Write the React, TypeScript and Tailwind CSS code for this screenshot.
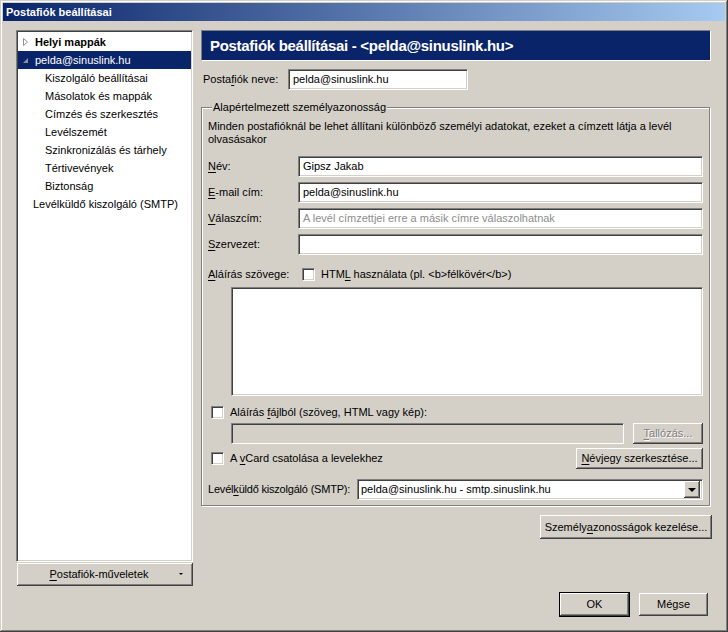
import { ReactNode } from 'react';

const sunken =
  'border border-t-[#808080] border-l-[#808080] border-b-white border-r-white shadow-[inset_1px_1px_0_#404040,inset_-1px_-1px_0_#d4d0c8]';
const raised =
  'bg-[#d4d0c8] shadow-[inset_-1px_-1px_0_#404040,inset_1px_1px_0_#ffffff,inset_-2px_-2px_0_#808080,inset_2px_2px_0_#d4d0c8]';

const treeItems = [
  'Kiszolgáló beállításai',
  'Másolatok és mappák',
  'Címzés és szerkesztés',
  'Levélszemét',
  'Szinkronizálás és tárhely',
  'Tértivevények',
  'Biztonság',
];

function Button({
  children,
  className = '',
  disabled = false,
  isDefault = false,
}: {
  children: ReactNode;
  className?: string;
  disabled?: boolean;
  isDefault?: boolean;
}) {
  return (
    <div
      className={`flex items-center justify-center ${raised} ${isDefault ? 'outline outline-1 outline-black' : ''} ${
        disabled ? 'text-[#808080] [text-shadow:1px_1px_0_#fff]' : 'text-black'
      } ${className}`}
    >
      {children}
    </div>
  );
}

function Checkbox() {
  return <span className={`block w-[13px] h-[13px] bg-white shrink-0 ${sunken}`} />;
}

function TextField({ value, placeholder, className = '' }: { value?: string; placeholder?: string; className?: string }) {
  return (
    <div className={`h-[21px] bg-white flex items-center px-[4px] ${sunken} ${className}`}>
      {value ? <span>{value}</span> : <span className="text-[#8d8d8d]">{placeholder}</span>}
    </div>
  );
}

function U({ children }: { children: ReactNode }) {
  return <span className="underline underline-offset-2">{children}</span>;
}

function FieldRow({ label, children }: { label: ReactNode; children: ReactNode }) {
  return (
    <div className="flex items-center h-[21px]">
      <div className="w-[90px] shrink-0">{label}</div>
      <div className="flex-1">{children}</div>
    </div>
  );
}

export default function App() {
  return (
    <div className="w-[728px] h-[632px] bg-[#d4d0c8] text-[11px] leading-[13px] text-black font-['Liberation_Sans',Arial,sans-serif] shadow-[inset_-1px_-1px_0_#404040,inset_1px_1px_0_#d4d0c8,inset_-2px_-2px_0_#808080,inset_2px_2px_0_#ffffff] p-[3px] flex flex-col overflow-hidden">
      {/* title bar */}
      <div className="h-[18px] shrink-0 bg-[linear-gradient(to_right,#0a246a,#a6caf0)] flex items-center pl-[3px]">
        <span className="text-white font-bold">Postafiók beállításai</span>
      </div>

      <div className="flex flex-1 px-[13px] pt-[9px]">
        {/* left column */}
        <div className="w-[177px] flex flex-col shrink-0">
          <div className={`h-[532px] bg-white ${sunken} px-[1px] pt-[2px]`}>
            <div className="h-[18px] flex items-center">
              <svg width="14" height="18" className="ml-[2px] shrink-0" viewBox="0 0 14 18">
                <path d="M3.5 5.5 L7.5 9 L3.5 12.5 Z" fill="none" stroke="#909090" />
              </svg>
              <span className="font-bold ml-[1px]">Helyi mappák</span>
            </div>
            <div className="h-[18px] flex items-center bg-[#0a246a] text-white">
              <svg width="14" height="18" className="ml-[2px] shrink-0" viewBox="0 0 14 18">
                <path d="M8 7 L8 12 L3 12 Z" fill="#8a8fa8" />
              </svg>
              <span className="ml-[1px]">pelda@sinuslink.hu</span>
            </div>
            {treeItems.map((t) => (
              <div key={t} className="h-[18px] flex items-center pl-[27px]">
                {t}
              </div>
            ))}
            <div className="h-[18px] flex items-center pl-[15px]">Levélküldő kiszolgáló (SMTP)</div>
          </div>
          <Button className="h-[23px] mt-[1px] ml-[1px] w-[176px] pr-[12px] relative">
            <span>
              <U>P</U>ostafiók-műveletek
            </span>
            <span className="absolute right-[10px] top-[10px] w-0 h-0 border-l-[2px] border-r-[2px] border-t-[2px] border-l-transparent border-r-transparent border-t-black" />
          </Button>
        </div>

        {/* right column */}
        <div className="flex-1 ml-[8px] flex flex-col">
          <div className="h-[31px] w-[510px] bg-[#0a246a] border border-t-[#808080] border-l-[#808080] border-b-white border-r-white flex items-center pl-[8px]">
            <span className="text-white font-bold text-[15px] tracking-[-0.3px]">
              Postafiók beállításai - &lt;pelda@sinuslink.hu&gt;
            </span>
          </div>

          <div className="flex items-center mt-[8px] ml-[2px]">
            <span className="w-[85px]">
              Posta<U>f</U>iók neve:
            </span>
            <TextField value="pelda@sinuslink.hu" className="w-[180px]" />
          </div>

          <fieldset className="mt-[11px] w-[509px] border border-[#808080] shadow-[1px_1px_0_#fff,inset_1px_1px_0_#fff] px-[6px] pb-[5px]">
            <legend className="ml-[4px] px-[1px] bg-[#d4d0c8] leading-[13px]">Alapértelmezett személyazonosság</legend>
            <p className="pt-[6px] pr-[4px]">
              Minden postafióknál be lehet állítani különböző személyi adatokat, ezeket a címzett látja a levél
              <br />
              olvasásakor
            </p>

            <div className="flex flex-col gap-[5px] mt-[10px]">
              <FieldRow label={<><U>N</U>év:</>}>
                <TextField value="Gipsz Jakab" />
              </FieldRow>
              <FieldRow label={<><U>E</U>-mail cím:</>}>
                <TextField value="pelda@sinuslink.hu" />
              </FieldRow>
              <FieldRow label={<><U>V</U>álaszcím:</>}>
                <TextField placeholder="A levél címzettjei erre a másik címre válaszolhatnak" />
              </FieldRow>
              <FieldRow label={<><U>S</U>zervezet:</>}>
                <TextField />
              </FieldRow>
            </div>

            <div className="flex items-center mt-[13px] h-[13px]">
              <span className="w-[94px]">
                <U>A</U>láírás szövege:
              </span>
              <Checkbox />
              <span className="ml-[6px]">
                HTM<U>L</U> használata (pl. &lt;b&gt;félkövér&lt;/b&gt;)
              </span>
            </div>
            <div className={`ml-[23px] mt-[6px] h-[109px] bg-white ${sunken}`} />

            <div className="flex items-center mt-[10px] ml-[3px] h-[13px]">
              <Checkbox />
              <span className="ml-[6px]">
                Aláírás <U>f</U>ájlból (szöveg, HTML vagy kép):
              </span>
            </div>
            <div className="flex items-center mt-[4px] ml-[23px] gap-[9px]">
              <div className={`h-[21px] flex-1 bg-[#d4d0c8] ${sunken}`} />
              <Button disabled className="h-[21px] w-[70px]">
                <span>
                  <U>T</U>allózás...
                </span>
              </Button>
            </div>

            <div className="flex items-center mt-[4px] ml-[3px] h-[21px]">
              <Checkbox />
              <span className="ml-[6px]">
                A <U>v</U>Card csatolása a levelekhez
              </span>
              <Button className="ml-auto h-[21px] w-[127px]">
                <span>
                  <U>N</U>évjegy szerkesztése...
                </span>
              </Button>
            </div>

            <div className="flex items-center mt-[10px] h-[21px]">
              <span className="w-[149px] tracking-[-0.2px]">
                Levél<U>k</U>üldő kiszolgáló (SMTP):
              </span>
              <div className={`flex-1 h-[21px] bg-white flex items-center pl-[3px] pr-[2px] ${sunken}`}>
                <span className="flex-1">pelda@sinuslink.hu - smtp.sinuslink.hu</span>
                <div className={`w-[16px] h-[17px] flex items-center justify-center ${raised}`}>
                  <span className="w-0 h-0 border-l-[4px] border-r-[4px] border-t-[4px] border-l-transparent border-r-transparent border-t-black" />
                </div>
              </div>
            </div>
          </fieldset>

          <div className="flex justify-end mt-[9px]">
            <Button className="h-[24px] w-[172px]">
              <span>
                Személy<U>a</U>zonosságok kezelése...
              </span>
            </Button>
          </div>
        </div>
      </div>

      <div className="flex justify-end gap-[10px] pr-[17px] pb-[13px]">
        <Button isDefault className="h-[23px] w-[69px]">
          OK
        </Button>
        <Button className="h-[23px] w-[69px]">Mégse</Button>
      </div>
    </div>
  );
}
